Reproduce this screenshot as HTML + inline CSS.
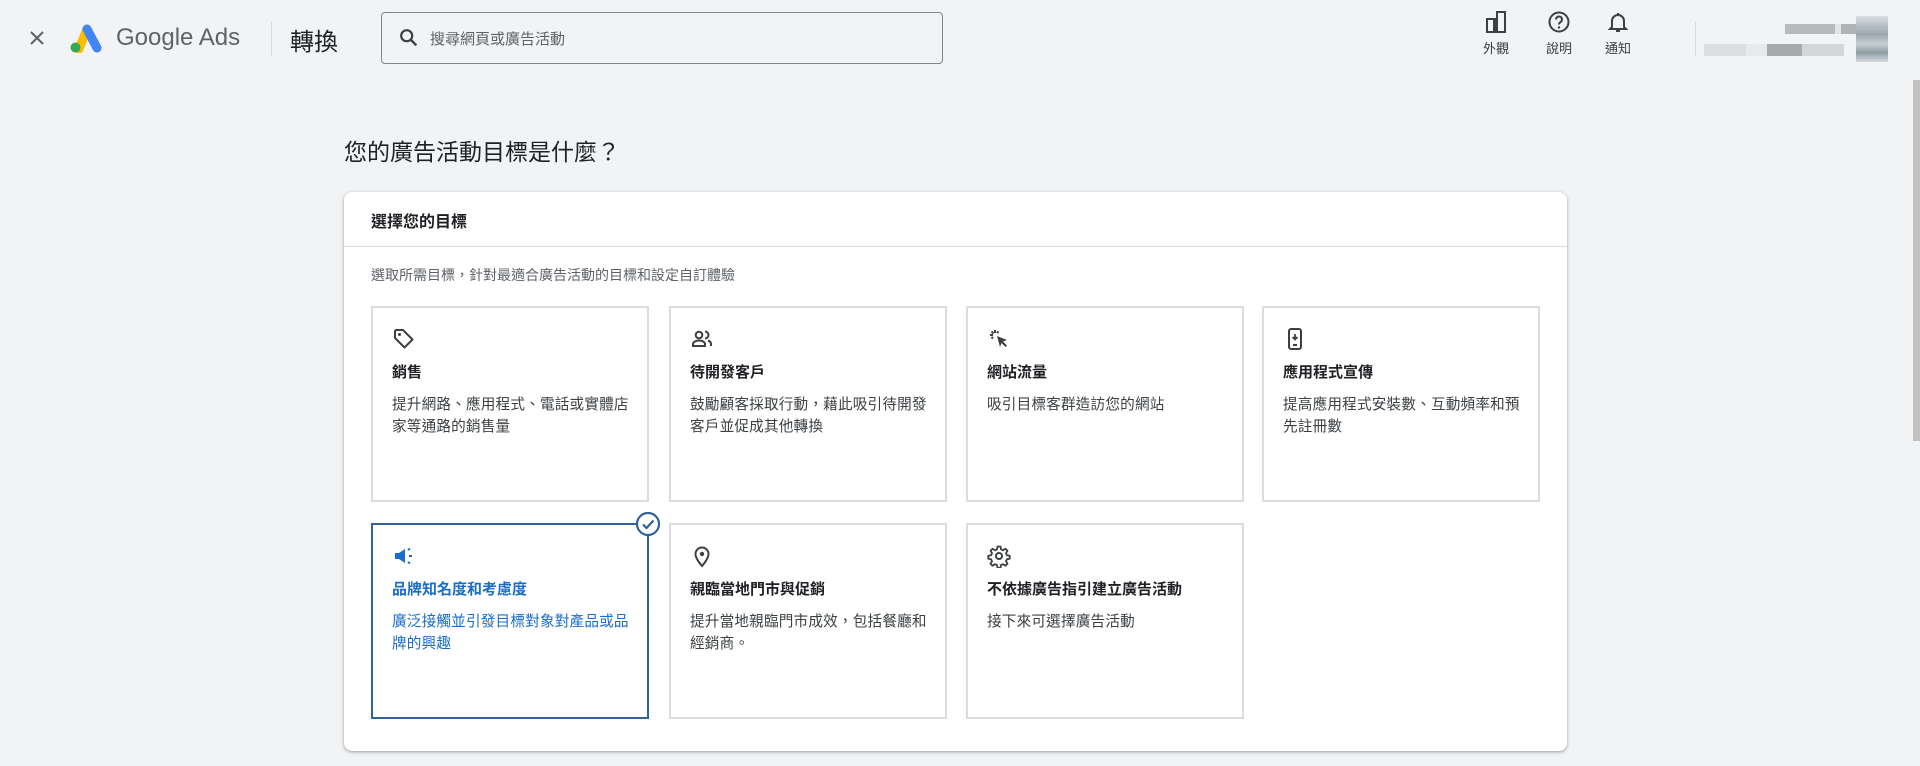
<!DOCTYPE html>
<html><head><meta charset="utf-8"><style>
*{box-sizing:border-box;margin:0;padding:0}
body{width:1920px;height:766px;background:#f1f3f4;font-family:"Liberation Sans","Noto Sans CJK TC",sans-serif;color:#202124;position:relative;overflow:hidden}
.abs{position:absolute}
.search{left:381px;top:12px;width:562px;height:52px;border:1px solid #80868b;border-radius:4px;background:#f1f3f4}
.search span{position:absolute;left:48px;top:15px;font-size:15px;color:#5f6368}
.hi{position:absolute;top:10px;width:50px;text-align:center;font-size:13px;color:#3c4043}
.hi svg{display:block;margin:0 auto 4px}
.card{left:344px;top:192px;width:1223px;height:559px;background:#fff;border-radius:8px;box-shadow:0 1px 2px rgba(60,64,67,.3),0 1px 3px 1px rgba(60,64,67,.15)}
.tile{position:absolute;width:278px;height:196px;border:2px solid #dadce0;background:#fff;padding:0 19px}
.tile svg{position:absolute;left:19px;top:19px}
.tile h3{position:absolute;left:19px;top:53px;font-size:15px;font-weight:bold;color:#202124}
.tile p{position:absolute;left:19px;width:250px;top:86px;font-size:14.6px;letter-spacing:0.2px;line-height:22px;color:#3c4043}
.sel{border-color:#2f6399}
.sel h3,.sel p{color:#1a6dc9}
</style></head><body>
<svg class="abs" style="left:28px;top:29px" width="18" height="18" viewBox="0 0 18 18"><path d="M3 3L15 15M15 3L3 15" stroke="#5f6368" stroke-width="2"/></svg>
<svg class="abs" style="left:67px;top:23px" width="37" height="30" viewBox="0 0 37 30"><path d="M12 26L20 6" stroke="#fbbc04" stroke-width="9" stroke-linecap="round"/><path d="M20 6L30 25" stroke="#4285f4" stroke-width="9" stroke-linecap="round"/><circle cx="8.5" cy="24.5" r="5" fill="#34a853"/></svg>
<div class="abs" style="left:116px;top:24px;font-size:24px;color:#5f6368">Google Ads</div>
<div class="abs" style="left:271px;top:22px;width:1px;height:34px;background:#dadce0"></div>
<div class="abs" style="left:290px;top:22px;font-size:24px;color:#202124">轉換</div>
<div class="abs search"><svg style="position:absolute;left:16px;top:14px" width="22" height="22" viewBox="0 0 24 24"><circle cx="9.5" cy="9.5" r="6" fill="none" stroke="#3c4043" stroke-width="2.4"/><path d="M14 14l6 6" stroke="#3c4043" stroke-width="2.6"/></svg><span>搜尋網頁或廣告活動</span></div>
<div class="hi" style="left:1471px"><svg width="24" height="24" viewBox="0 0 24 24"><path d="M13 2h8v20H3V9h10z" fill="none" stroke="#3c4043" stroke-width="2"/><rect x="9" y="9" width="5" height="13" fill="#3c4043"/></svg>外觀</div>
<div class="hi" style="left:1534px"><svg width="24" height="24" viewBox="0 0 24 24"><circle cx="12" cy="12" r="9.5" fill="none" stroke="#3c4043" stroke-width="2"/><path d="M9 9.5a3 3 0 1 1 4.5 2.6c-1 .6-1.5 1.2-1.5 2.4" fill="none" stroke="#3c4043" stroke-width="2"/><circle cx="12" cy="17.5" r="1.2" fill="#3c4043"/></svg>說明</div>
<div class="hi" style="left:1593px"><svg width="24" height="24" viewBox="0 0 24 24"><path d="M6 17V11a6 6 0 0 1 12 0v6l2 2H4z" fill="none" stroke="#3c4043" stroke-width="2"/><path d="M10 21h4" stroke="#3c4043" stroke-width="2"/><path d="M12 3v2" stroke="#3c4043" stroke-width="2"/></svg>通知</div>
<div class="abs" style="left:1695px;top:22px;width:1px;height:34px;background:#dadce0"></div>
<div class="abs" style="left:1760px;top:24px;width:125px;height:10px;background:linear-gradient(90deg,#f1f3f4 0 20%,#b7b9ba 20% 60%,#e4e5e6 60% 65%,#b0b2b3 65% 100%)"></div>
<div class="abs" style="left:1704px;top:44px;width:140px;height:12px;background:linear-gradient(90deg,#dcdedf 0 30%,#e8e9ea 30% 45%,#a7a9aa 45% 70%,#d5d6d7 70% 100%)"></div>
<div class="abs" style="left:1856px;top:16px;width:32px;height:46px;background:linear-gradient(#d8dcdf,#9aa6ad 40%,#c7ced2 60%,#8e9ca4 80%,#d8dcdf)"></div>
<div class="abs" style="left:1913px;top:80px;width:7px;height:361px;background:#c1c1c1"></div>
<div class="abs" style="left:344px;top:133px;font-size:23px;color:#202124">您的廣告活動目標是什麼？</div>
<div class="abs card">
<div class="abs" style="left:27px;top:16px;font-size:16px;font-weight:bold">選擇您的目標</div>
<div class="abs" style="left:0;right:0;top:54px;height:1px;background:#dadce0"></div>
<div class="abs" style="left:27px;top:73px;font-size:14px;color:#5f6368">選取所需目標，針對最適合廣告活動的目標和設定自訂體驗</div>

<div class="tile" style="left:27px;top:114px"><svg width="24" height="24" viewBox="0 0 24 24"><path d="M3 4v7l9.5 9.5 8-8L11 3H4z" fill="none" stroke="#3c4043" stroke-width="2" stroke-linejoin="round"/><circle cx="7.5" cy="7.5" r="1.5" fill="#3c4043"/></svg><h3>銷售</h3><p>提升網路、應用程式、電話或實體店家等通路的銷售量</p></div>
<div class="tile" style="left:325px;top:114px"><svg width="24" height="24" viewBox="0 0 24 24"><circle cx="9" cy="8" r="3.3" fill="none" stroke="#3c4043" stroke-width="2"/><path d="M3 19v-2c0-2 3-3.5 6-3.5s6 1.5 6 3.5v2z" fill="none" stroke="#3c4043" stroke-width="2"/><path d="M15 4.5a3.5 3.5 0 0 1 0 7M18 13.5c2 .7 3 2 3 3.5v2" fill="none" stroke="#3c4043" stroke-width="2"/></svg><h3>待開發客戶</h3><p>鼓勵顧客採取行動，藉此吸引待開發客戶並促成其他轉換</p></div>
<div class="tile" style="left:622px;top:114px"><svg width="24" height="24" viewBox="0 0 24 24"><path d="M10 9l10 4-4 1.5 4 4-1.5 1.5-4-4L13 20z" fill="#3c4043"/><path d="M8 3v3M3 8h3M4.5 4.5l2 2M11.5 4.5l-1.5 1.5M4.5 11.5l1.5-1.5" stroke="#3c4043" stroke-width="2"/></svg><h3>網站流量</h3><p>吸引目標客群造訪您的網站</p></div>
<div class="tile" style="left:918px;top:114px"><svg width="24" height="24" viewBox="0 0 24 24"><rect x="6" y="2" width="12" height="20" rx="2" fill="none" stroke="#3c4043" stroke-width="2"/><path d="M12 7v5M9.5 10l2.5 2.5 2.5-2.5" stroke="#3c4043" stroke-width="1.8" fill="none"/><path d="M10 18h4" stroke="#3c4043" stroke-width="2"/></svg><h3>應用程式宣傳</h3><p>提高應用程式安裝數、互動頻率和預先註冊數</p></div>

<div class="tile sel" style="left:27px;top:331px"><svg width="24" height="24" viewBox="0 0 24 24"><path d="M3 9h4l6-4v14l-6-4H3z" fill="#1a6dc9"/><path d="M16 6l2-1.5M17 12h3M16 18l2 1.5" stroke="#1a6dc9" stroke-width="2"/></svg><h3>品牌知名度和考慮度</h3><p>廣泛接觸並引發目標對象對產品或品牌的興趣</p></div>
<svg class="abs" style="left:291px;top:319px" width="26" height="26" viewBox="0 0 26 26"><circle cx="13" cy="13" r="11" fill="#fff" stroke="#2f6399" stroke-width="2.2"/><path d="M8 13.5l3.5 3.5 7-7.5" fill="none" stroke="#2f6399" stroke-width="2.2"/></svg>
<div class="tile" style="left:325px;top:331px"><svg width="24" height="24" viewBox="0 0 24 24"><path d="M12 22s-6.5-7-6.5-12a6.5 6.5 0 0 1 13 0c0 5-6.5 12-6.5 12z" fill="none" stroke="#3c4043" stroke-width="2"/><circle cx="12" cy="10" r="2.2" fill="#3c4043"/></svg><h3>親臨當地門市與促銷</h3><p>提升當地親臨門市成效，包括餐廳和經銷商。</p></div>
<div class="tile" style="left:622px;top:331px"><svg width="24" height="24" viewBox="0 0 24 24"><circle cx="12" cy="12" r="3" fill="none" stroke="#3c4043" stroke-width="2"/><path d="M10.5 2.5h3l.5 2.8 2 1 2.5-1.6 2 2-1.5 2.5.9 2 2.8.5v3l-2.8.5-.9 2 1.5 2.5-2 2-2.5-1.5-2 .9-.5 2.8h-3l-.5-2.8-2-.9-2.5 1.5-2-2 1.5-2.5-.9-2-2.8-.5v-3l2.8-.5.9-2L3.6 6.7l2-2 2.5 1.6 2-1z" fill="none" stroke="#3c4043" stroke-width="1.8" stroke-linejoin="round"/></svg><h3>不依據廣告指引建立廣告活動</h3><p>接下來可選擇廣告活動</p></div>
</div>
</body></html>
